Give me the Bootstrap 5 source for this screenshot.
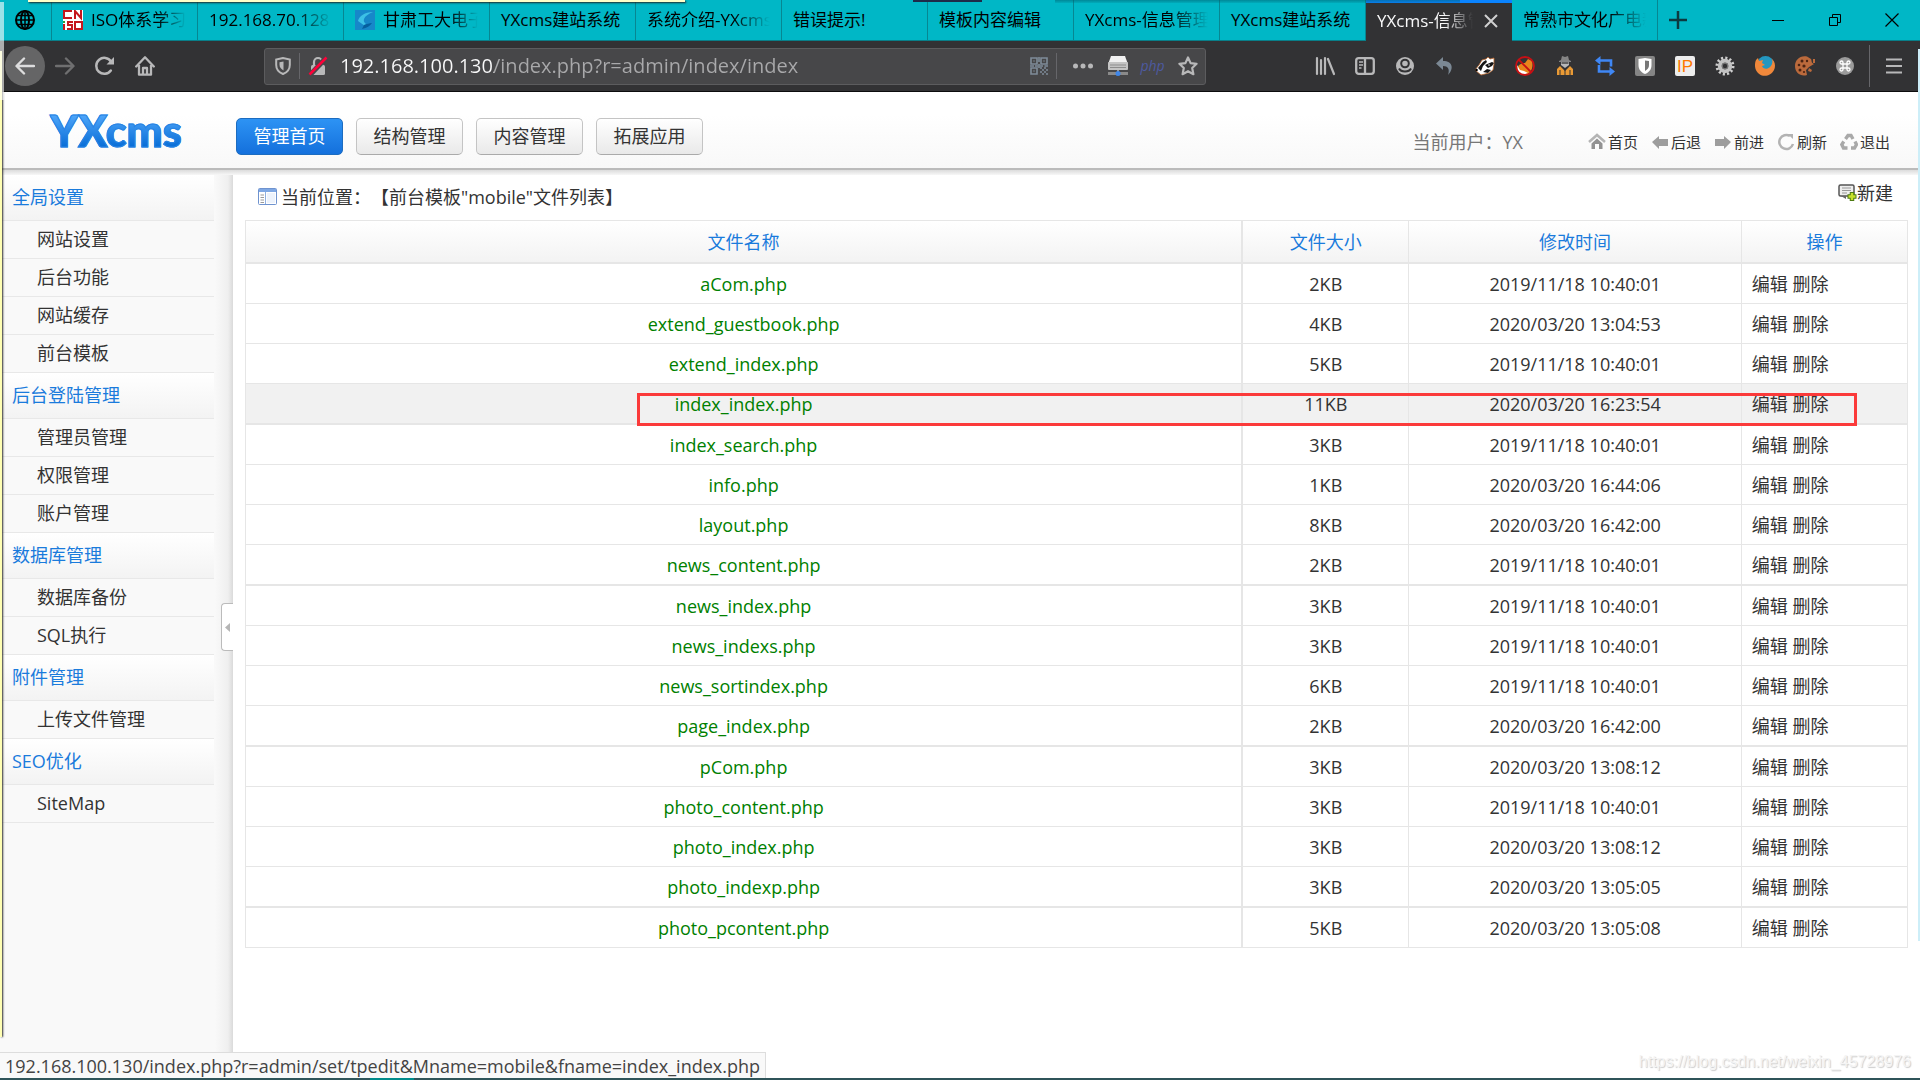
<!DOCTYPE html>
<html lang="zh-CN">
<head>
<meta charset="utf-8">
<meta name="viewport" content="width=device-width, initial-scale=1">
<title>YXcms-信息管理</title>
<link href="https://cdn.jsdelivr.net/npm/bootstrap@5.3.0/dist/css/bootstrap.min.css" rel="stylesheet">
<style>
body{font-family:"Open Sans","Noto Sans CJK SC",sans-serif;font-size:18px;line-height:24px;color:#333;background:#fff;overflow:hidden;text-spacing-trim:space-all}
a{text-decoration:none;color:inherit}
button{font:inherit}
svg{display:block;flex:none}

/* browser tabs */
.tabstrip{height:41px;background:#00b7c6;border-bottom:1px solid #087f89;color:#000;font-size:17px}
.btab{flex:0 1 146px;min-width:0;border-right:1px solid #078792;padding:0 11px;color:#000}
.btab.pinned{flex-basis:52px;padding:0 15px}
.btab .cap{flex:1;overflow:hidden;white-space:nowrap;-webkit-mask-image:linear-gradient(to right,#000 70%,transparent 100%)}
.btab.fits .cap{-webkit-mask-image:none;overflow:visible}
.btab.current{background:#323234;color:#f9f9fa;border-top:3px solid #0a84ff;border-right:0;height:41px;padding-bottom:3px}
.plainbtn{background:none;border:0;padding:0;color:inherit;display:flex;align-items:center;justify-content:center}
.winbtn{width:57px}

/* browser toolbar */
.toolbar{height:51px;background:#323234;border-bottom:1px solid #0c0c0d;color:#b8b8b9;padding-left:5px;padding-right:6px}
.tool{width:40px;height:40px}
.tool.back{border-radius:50%;background:#656566;color:#dcdcdd}
.tool.off{color:#6f6f70}
.urlbar{flex:0 1 942px;height:37px;margin-left:99px;background:#474749;border:1px solid #5c5c5e;border-radius:3px;padding-left:6px}
.urlbar .slot{width:35px}
.urlbar .insecure{margin-right:12px}
.vline{width:1px;height:26px;background:#66666a}
.vline.tall{height:42px}
.phpmark{font-size:14px;line-height:20px;color:#4d5aa0}
.urlbar input{flex:1;min-width:0;border:0;outline:0;padding:0;font-size:20px;line-height:28px;color:transparent;background:linear-gradient(to right,#f9f9fa 154px,#a9a9ab 154px);-webkit-background-clip:text;background-clip:text}

/* application header */
.apphead{height:78px;padding:12px 30px 0 50px;background:linear-gradient(#fff 30%,#f8f8f8);border-bottom:2px solid #bbb}
.brandname{font-family:"Lato Black",Lato,sans-serif;font-weight:900;font-size:43px;line-height:52px;width:186px;margin-bottom:10px;color:transparent;-webkit-text-stroke:1px #2783e4;background:linear-gradient(#4ba3f8 22%,#0b70d8 78%);-webkit-background-clip:text;background-clip:text}
.mainnav{gap:13px}
.mainnav .btn{width:107px;height:37px;padding:0;font-size:18px;line-height:24px;border-radius:5px;color:#333;border:1px solid #c4c4c4;border-bottom-color:#aaa;background:linear-gradient(#fff,#e9e9e9)}
.mainnav .btn.active{color:#fff;border-color:#1c6cc0;background:linear-gradient(#2d93f4,#1470dc)}
.who{color:#777;margin-right:65px;padding-top:12px}
.quick{gap:13px;font-size:15px;padding-top:12px}
.quick a{gap:2px}
.headshade{height:5px;background:linear-gradient(#dcdcdc,#f7f7f7)}

/* sidebar */
.side{width:233px;position:relative;background:linear-gradient(to right,#f9f9f9 215px,#efefef 228px,#dadada)}
.side nav{width:214px}
.side h2{margin:0;height:46px;padding:10px 12px;font-size:18px;line-height:24px;font-weight:400;color:#1a7bdc;border-bottom:1px solid #e8e8e8;background:linear-gradient(#fff,#f3f3f3)}
.side nav a{display:block;height:38px;padding:6px 37px;border-bottom:1px solid #e8e8e8;background:#f9f9f9}
.fold{position:absolute;right:0;top:428px;width:12px;height:48px;background:#fff;border:1px solid #bbb;border-right:0;border-radius:4px 0 0 4px}

/* content */
.pane{padding:0 12px}
.crumb{height:45px;padding:0 15px 2px 13px}
.files{width:100%;table-layout:fixed;border-collapse:separate;border-spacing:0;border:1px solid #e6e6e6;border-right:0;border-bottom:0}
.files th,.files td{padding:0 10px;border-right:1px solid #e6e6e6;border-bottom:1px solid #e6e6e6;text-align:center}
.files th{height:43px;font-weight:400;color:#1a7bdc;background:linear-gradient(#fff,#f3f3f3);border-bottom-width:2px}
.files td{height:40px}
.files tr>:first-child{border-right-width:2px}
.files tbody tr:nth-child(4n) td{height:41px;border-bottom-width:2px}
.files td:last-child{text-align:left}
.files td:first-child a{color:#008000}
.files .hot td{background:#f1f1f1}
.marker{position:absolute;left:392px;right:51px;top:173px;height:33px;border:3px solid #fb3a3a;pointer-events:none}

/* overlays */
.status{position:absolute;left:0;bottom:2px;background:#f9f9f9;border:1px solid #ddd;border-width:1px 1px 0 0;padding:1px 5px 0;color:#444}
.stamp{position:absolute;right:9px;bottom:6px;font:16px/24px "Liberation Sans",sans-serif;color:#f4f4f4;text-shadow:1px 1px 1px #ccc}
.taskedge{height:2px;background:linear-gradient(to right,#2f5459 370px,#008b8b 370px,#008b8b 414px,#2f5459 414px)}
.note-top{position:absolute;left:28px;top:0;width:657px;height:2px;background:#ffffc8;box-shadow:1px 1px 2px #222}
.note-left{position:absolute;left:0;top:51px;bottom:43px;width:2px;background:#ffffb4;box-shadow:1px 0 2px #222}
.ghost-left{position:absolute;left:0;top:2px;width:4px;height:98px;background:#ffffff99}
.glow-right{position:absolute;right:0;top:49px;bottom:139px;width:2px;background:#cdeef8}
.dark-top{position:absolute;left:913px;top:0;width:69px;height:2px;background:#1e2b4a}
.shade-top{position:absolute;left:1055px;top:0;width:405px;height:3px;background:linear-gradient(#00607088,#00607022)}
</style>
<script src="https://cdn.jsdelivr.net/npm/bootstrap@5.3.0/dist/js/bootstrap.bundle.min.js"></script>
</head>
<body>
<div class="d-flex flex-column vh-100 position-relative">

<div class="tabstrip d-flex align-items-stretch">
  <a href="#" class="btab pinned d-flex align-items-center" aria-label="Pinned tab"><svg width="20" height="20" viewBox="0 0 20 20" fill="none" stroke="#000" stroke-width="2"><circle cx="10" cy="10" r="9"/><ellipse cx="10" cy="10" rx="4" ry="9"/><path d="M10 1v18M1 10h18M2.500 5.500h15M2.500 14.500h15" stroke-width="1.500"/></svg></a>
  <a href="#" class="btab d-flex align-items-center gap-2"><svg width="20" height="20" viewBox="0 0 20 20"><path fill="#fff" d="M0 0h20v20H0z"/><g fill="none" stroke="#c4161c" stroke-width="2"><path d="M9 1H1v7h8M12 9V1l6 7V0M1 14v6M10 12H5v3h4v4H4M12 12h7v7h-7z"/></g><path fill="#2a9d3a" d="M0 11h2v2H0z"/></svg><span class="cap">ISO体系学习</span></a>
  <a href="#" class="btab d-flex align-items-center"><span class="cap">192.168.70.128</span></a>
  <a href="#" class="btab d-flex align-items-center gap-2"><svg width="20" height="20" viewBox="0 0 20 20"><path fill="#1787c9" d="M0 0h20v20H0z"/><path fill="#3cc0e6" d="M18 2C10 2 4 6 3 11l7 5 1-2c-4-3-3-8 7-12z"/><path fill="#065f9f" d="M7 19c5-1 8-3 10-6-2 0-6 1-8 2z"/></svg><span class="cap">甘肃工大电子</span></a>
  <a href="#" class="btab fits d-flex align-items-center"><span class="cap">YXcms建站系统</span></a>
  <a href="#" class="btab d-flex align-items-center"><span class="cap">系统介绍-YXcms</span></a>
  <a href="#" class="btab fits d-flex align-items-center"><span class="cap">错误提示!</span></a>
  <a href="#" class="btab fits d-flex align-items-center"><span class="cap">模板内容编辑</span></a>
  <a href="#" class="btab d-flex align-items-center"><span class="cap">YXcms-信息管理</span></a>
  <a href="#" class="btab fits d-flex align-items-center"><span class="cap">YXcms建站系统</span></a>
  <div class="btab current d-flex align-items-center"><span class="cap">YXcms-信息管</span><button class="plainbtn ms-2" aria-label="Close tab"><svg width="20" height="20" viewBox="0 0 20 20" stroke="#d0d0d0" stroke-width="2"><path d="M4 4l12 12M16 4L4 16"/></svg></button></div>
  <a href="#" class="btab d-flex align-items-center"><span class="cap">常熟市文化广电新</span></a>
  <button class="plainbtn tool" aria-label="New tab"><svg width="18" height="18" viewBox="0 0 18 18" stroke="#0c3a40" stroke-width="2.500"><path d="M9 0v18M0 9h18"/></svg></button>
  <div class="d-flex ms-auto">
    <button class="plainbtn winbtn" aria-label="Minimize"><svg width="12" height="12" viewBox="0 0 12 12" stroke="#000"><path d="M0 6.500h12"/></svg></button>
    <button class="plainbtn winbtn" aria-label="Restore"><svg width="12" height="12" viewBox="0 0 12 12" fill="none" stroke="#000"><path d="M.5 3.500h8v8h-8zM3.500 3.500v-3h8v8h-3"/></svg></button>
    <button class="plainbtn winbtn" aria-label="Close"><svg width="14" height="14" viewBox="0 0 14 14" stroke="#000" stroke-width="1.200"><path d="M.5.5l13 13M13.500.5l-13 13"/></svg></button>
  </div>
</div>

<div class="toolbar d-flex align-items-center">
  <button class="plainbtn tool back" aria-label="Back"><svg width="20" height="20" viewBox="0 0 20 20" fill="none" stroke="currentColor" stroke-width="2.400" stroke-linecap="round" stroke-linejoin="round"><path d="M19 10H2M9 2.500L1.500 10 9 17.500"/></svg></button>
  <button class="plainbtn tool off" aria-label="Forward"><svg width="20" height="20" viewBox="0 0 20 20" fill="none" stroke="currentColor" stroke-width="2.400" stroke-linecap="round" stroke-linejoin="round"><path d="M1 10h17M11 2.500l7.500 7.500L11 17.500"/></svg></button>
  <button class="plainbtn tool" aria-label="Reload"><svg width="20" height="20" viewBox="0 0 20 20" fill="none" stroke="currentColor" stroke-width="2.500" stroke-linecap="round"><path d="M15.800 14.500A8 8 0 1 1 16 5.500"/><path d="M19 1v7.500h-7.500z" fill="currentColor" stroke="none"/></svg></button>
  <button class="plainbtn tool" aria-label="Home"><svg width="20" height="20" viewBox="0 0 20 20" fill="none" stroke="currentColor" stroke-width="2.300" stroke-linecap="round" stroke-linejoin="round"><path d="M1.200 10.500L10 1.300l8.800 9.200M4 9v9.700h12V9M8 18v-6h4v6"/></svg></button>
  <div class="urlbar d-flex align-items-center">
    <svg class="mx-1" width="16" height="18" viewBox="0 0 16 18" fill="none" stroke="currentColor" stroke-width="2"><path d="M8 1L1.200 2.500V8c0 5 3 7.500 6.800 9 3.800-1.500 6.800-4 6.800-9V2.500z"/><path d="M8.500 4.500v9c-2.500-1.500-4-3-4-6V5.300z" fill="currentColor" stroke="none"/></svg>
    <span class="vline ms-1 me-2"></span>
    <svg class="insecure" width="20" height="20" viewBox="0 0 20 20"><path d="M6 10V6a4 4 0 0 1 8 0v4" fill="none" stroke="#b8b8b9" stroke-width="2.200"/><rect x="3" y="9" width="14" height="10" rx="1.500" fill="#b8b8b9"/><path d="M2 19L18 2" stroke="#474749" stroke-width="5"/><path d="M1.500 18.500L18.500 1.500" stroke="#ff0039" stroke-width="2.500"/></svg>
    <input type="text" aria-label="Address" value="192.168.100.130/index.php?r=admin/index/index" spellcheck="false">
    <button class="plainbtn slot" aria-label="QR code"><svg width="18" height="18" viewBox="0 0 18 18" fill="none" stroke="#7f8c99" stroke-width="1.600"><path d="M1 1h6v6H1zM11 1h6v6h-6zM1 11h6v6H1zM3.500 4h1M13.500 4h1M3.500 14h1M9 0v5M9 7v4M0 9h4M5 9h3M10 9h3M14.500 9H18"/><path stroke-dasharray="2 2" d="M10 11h8M12 13h6M10 15h8M12 17h6"/></svg></button>
    <span class="vline me-2"></span>
    <button class="plainbtn slot" aria-label="Page actions"><svg width="20" height="6" viewBox="0 0 20 6" fill="currentColor"><circle cx="2.500" cy="3" r="2.500"/><circle cx="10" cy="3" r="2.500"/><circle cx="17.500" cy="3" r="2.500"/></svg></button>
    <button class="plainbtn slot" aria-label="Server"><svg width="20" height="20" viewBox="0 0 20 20"><path d="M3 0h14l2.500 7h-19z" fill="#f1f1f1"/><rect y="6" width="20" height="8" rx="1" fill="#c4c4c4"/><path d="M2 9h16M2 11.500h16" stroke="#8d8d8d"/><path d="M0 17.500h20" stroke="#8a8a8a" stroke-width="3"/><path d="M10 14v2" stroke="#999" stroke-width="2"/><circle cx="10" cy="17.500" r="2.500" fill="#3f86e8"/></svg></button>
    <button class="plainbtn slot" aria-label="PHP"><em class="phpmark">php</em></button>
    <button class="plainbtn slot" aria-label="Bookmark"><svg width="20" height="20" viewBox="0 0 20 20" fill="none" stroke="currentColor" stroke-width="2.200" stroke-linejoin="round"><path d="M10 1.500l2.600 5.600 6 .7-4.400 4.200 1.200 6.200L10 15.200l-5.400 3L5.800 12 1.400 7.800l6-.7z"/></svg></button>
  </div>
  <div class="d-flex align-items-center ms-auto">
    <button class="plainbtn tool" aria-label="Library"><svg width="20" height="20" viewBox="0 0 20 20" stroke="currentColor" stroke-width="2.200" stroke-linecap="round"><path d="M2 2v16M6 4v14M10 2v16M13 3l6 15"/></svg></button>
    <button class="plainbtn tool" aria-label="Sidebar"><svg width="20" height="20" viewBox="0 0 20 20" fill="none" stroke="currentColor" stroke-width="2.300"><rect x="1.200" y="2.200" width="17.600" height="15.600" rx="2.500"/><path d="M10 2v16"/><path d="M4 6h4M4 9h4M4 12h2.500" stroke-width="1.500"/></svg></button>
    <button class="plainbtn tool" aria-label="Account"><svg width="20" height="20" viewBox="0 0 20 20"><circle cx="10" cy="10" r="9" fill="#b8b8b9"/><circle cx="10" cy="7.500" r="3.800" fill="#b8b8b9" stroke="#323234" stroke-width="2"/><path d="M4 12.500c2 4 10 4 12 0" fill="none" stroke="#323234" stroke-width="2"/></svg></button>
    <button class="plainbtn tool" aria-label="Undo"><svg width="20" height="20" viewBox="0 0 20 20"><path fill="#7b8894" d="M8 1L1 7.500 8 14v-4c5 0 7 3 5 9 6-6 5-14-5-14z"/></svg></button>
    <button class="plainbtn tool" aria-label="Privacy Badger"><svg width="20" height="20" viewBox="0 0 20 20"><path d="M0 14L4 9l3-5 4-1 2-2 2 2 4-1v6l-1 6-4 3-8 2z" fill="#fff" stroke="#b8642c" stroke-width=".8"/><path d="M3 12l5-6 3-2 1 2-4 4-2 5zM10 9l7-3 2 1-2 3-4 2zM8 16l4-3 4 1-3 3z" fill="#151515"/><circle cx="1.500" cy="14" r="1.300"/><circle cx="14" cy="9" r=".8" fill="#fff"/></svg></button>
    <button class="plainbtn tool" aria-label="Blocked fox"><svg width="20" height="20" viewBox="0 0 20 20"><path d="M2 15C2 9 6 7 10 7l3-4 4 2c2 7-2 14-8 14-4 0-6-2-7-4z" fill="#e8851c"/><path d="M2 9l3 5 4 1 4 2-5 2-5-3z" fill="#fff"/><circle cx="10" cy="10" r="9" fill="none" stroke="#c80f14" stroke-width="1.800"/><path d="M3.500 3.500l13 13" stroke="#c80f14" stroke-width="1.800"/></svg></button>
    <button class="plainbtn tool" aria-label="User agent"><svg width="20" height="20" viewBox="0 0 20 20"><path d="M6 4l1-4 3 1 3-1 1 4 2 1v1H4V5z" fill="#858585"/><path d="M6 6h8v3l-4 3-4-3z" fill="#b8b8b8"/><path d="M6.500 7h7" stroke="#444" stroke-width="1.500"/><path d="M5 10l5 5 5-5 3 3v6H2v-6z" fill="#e99a35"/><path d="M10 14v6M5 14v6M15 14v6" stroke="#323234"/></svg></button>
    <button class="plainbtn tool" aria-label="Loop"><svg width="20" height="20" viewBox="0 0 20 20" fill="none" stroke="#3f87f5" stroke-width="2.600"><path d="M4 4.500h12v6M16 15.500H4V9"/><path d="M5.500 0v9L0 4.500zM14.500 11v9l5.500-4.500z" fill="#3f87f5" stroke="none"/></svg></button>
    <button class="plainbtn tool" aria-label="Shield"><svg width="20" height="20" viewBox="0 0 20 20"><rect width="20" height="20" rx="2" fill="#858585"/><path d="M10 2L3.500 3v6c0 5 3 7.500 6.500 9 3.500-1.500 6.500-4 6.500-9V3z" fill="#fff"/><path d="M10 4.500V15c2.500-1.500 4-3 4-6V5z" fill="#777"/></svg></button>
    <button class="plainbtn tool" aria-label="IP"><svg width="20" height="20" viewBox="0 0 20 20"><rect width="20" height="20" rx="2" fill="#ededed"/><text x="10" y="16" text-anchor="middle" font-family="Liberation Sans" font-size="17" fill="#ff7700">IP</text></svg></button>
    <button class="plainbtn tool" aria-label="Settings"><svg width="20" height="20" viewBox="0 0 20 20" fill="none"><circle cx="10" cy="10" r="8" stroke="#cfcfcf" stroke-width="3" stroke-dasharray="2.100 2.090"/><circle cx="10" cy="10" r="5.200" stroke="#c2c2c2" stroke-width="4"/><circle cx="10" cy="10" r="2.800" stroke="#777" stroke-width="1.200"/></svg></button>
    <button class="plainbtn tool" aria-label="Firefox"><svg width="20" height="20" viewBox="0 0 20 20"><circle cx="10.500" cy="8.500" r="8.500" fill="#2497c0"/><path d="M1 4l2-2 1 3 4-1-1 3 3 2-3 1c1 3 5 4 8 1s3-7 1-9c4 3 5 8 3 12-3 6-11 8-16 3C0 14-1 9 1 4z" fill="#f0883b"/></svg></button>
    <button class="plainbtn tool" aria-label="Cookies"><svg width="20" height="20" viewBox="0 0 20 20"><path d="M12 .5C5-1 0 4 0 10c0 7 6 11 12 9l-1-5 3-3 5-3c-3-1-2-3-3-5z" fill="#bb6a3c"/><path d="M14 12l3 2-1 2-3-1z" fill="#bb6a3c"/><path d="M19 3v4" stroke="#bb6a3c" stroke-width="2"/><g fill="#4b2413"><circle cx="7" cy="5" r="1.500"/><circle cx="4" cy="9" r="1.300"/><circle cx="9" cy="10" r="1.600"/><circle cx="5" cy="14" r="1.500"/><circle cx="12" cy="5" r="1.200"/><circle cx="9" cy="16" r="1.100"/></g></svg></button>
    <button class="plainbtn tool" aria-label="Shortcuts"><svg width="20" height="20" viewBox="0 0 20 20" fill="none"><circle cx="10" cy="10" r="9" fill="#9b9b9b"/><path d="M8 8h4v4H8zM8 8H6.500A1.500 1.500 0 1 1 8 6.500zM12 8V6.500A1.500 1.500 0 1 1 13.500 8zM12 12h1.500a1.500 1.500 0 1 1-1.500 1.500zM8 12v1.500A1.500 1.500 0 1 1 6.500 12z" stroke="#fff" stroke-width="1.300"/></svg></button>
    <span class="vline tall ms-1"></span>
    <button class="plainbtn tool ms-1" aria-label="Menu"><svg width="16" height="16" viewBox="0 0 16 16" stroke="currentColor" stroke-width="2"><path d="M0 1.500h16M0 8h16M0 14.500h16"/></svg></button>
  </div>
</div>

<header class="apphead d-flex align-items-center">
  <a href="#" class="brandname">YXcms</a>
  <nav class="mainnav d-flex">
    <button class="btn active">管理首页</button>
    <button class="btn">结构管理</button>
    <button class="btn">内容管理</button>
    <button class="btn">拓展应用</button>
  </nav>
  <span class="who ms-auto">当前用户：YX</span>
  <nav class="quick d-flex">
    <a href="#" class="d-flex align-items-center"><svg width="18" height="18" viewBox="0 0 18 18"><path d="M1 9l8-7 8 7" fill="none" stroke="#b5b5b5" stroke-width="2.500"/><path d="M9 5.500L3.500 10.500V16H7v-5h4v5h3.500v-5.500z" fill="#929292"/></svg>首页</a>
    <a href="#" class="d-flex align-items-center"><svg width="18" height="18" viewBox="0 0 18 18"><path d="M1 9l7-6v3h9v7H8v3z" fill="#9d9d9d"/></svg>后退</a>
    <a href="#" class="d-flex align-items-center"><svg width="18" height="18" viewBox="0 0 18 18"><path d="M17 9l-7-6v3H1v7h9v3z" fill="#9d9d9d"/></svg>前进</a>
    <a href="#" class="d-flex align-items-center"><svg width="18" height="18" viewBox="0 0 18 18"><path d="M13 3A7 7 0 1 0 16 11" fill="none" stroke="#b3b3b3" stroke-width="2.500"/><path d="M10.500 1H16v5z" fill="#b3b3b3"/></svg>刷新</a>
    <a href="#" class="d-flex align-items-center"><svg width="18" height="18" viewBox="0 0 18 18" fill="none" stroke="#a9a9a9" stroke-width="3.400"><path d="M5.500 6L8 2.500h3L13 6M15 8.500l1.500 3-2 3.500H11M7.500 15h-4L1.800 11.500l2-3" /></svg>退出</a>
  </nav>
</header>
<div class="headshade"></div>

<div class="d-flex flex-grow-1">
  <aside class="side flex-shrink-0">
    <nav>
      <h2>全局设置</h2>
      <a href="#">网站设置</a><a href="#">后台功能</a><a href="#">网站缓存</a><a href="#">前台模板</a>
      <h2>后台登陆管理</h2>
      <a href="#">管理员管理</a><a href="#">权限管理</a><a href="#">账户管理</a>
      <h2>数据库管理</h2>
      <a href="#">数据库备份</a><a href="#">SQL执行</a>
      <h2>附件管理</h2>
      <a href="#">上传文件管理</a>
      <h2>SEO优化</h2>
      <a href="#">SiteMap</a>
    </nav>
    <button class="plainbtn fold" aria-label="Collapse sidebar"><svg width="5" height="9" viewBox="0 0 5 9"><path d="M5 0v9L0 4.500z" fill="#b5b5b5"/></svg></button>
  </aside>

  <main class="pane flex-grow-1">
    <div class="crumb d-flex align-items-center justify-content-between">
      <div class="d-flex align-items-center"><svg class="me-1" width="19" height="17" viewBox="0 0 19 17"><rect x=".5" y=".5" width="18" height="16" rx="1" fill="#fff" stroke="#6f93cf"/><path d="M1 1h17v3H1z" fill="#7fa8e4"/><path d="M7.500 4v12" stroke="#8fb0e0"/><path d="M2.500 7h3.500M2.500 9.500h3.500M2.500 12h3.500M2.500 14.500h3.500" stroke="#9a9a9a"/><path d="M9 5h8v10H9z" fill="#edf3fc"/></svg><span>当前位置：【前台模板"mobile"文件列表】</span></div>
      <a href="#" class="d-flex align-items-center pb-2"><svg width="19" height="18" viewBox="0 0 19 18"><rect x="1" y="1" width="15" height="11" rx="1.500" fill="#eee" stroke="#555" stroke-width="1.500"/><path d="M4 4h9M4 6.500h9M4 9h5" stroke="#999"/><path d="M3 12h5v3z" fill="#666"/><path d="M14 8v9M9.500 12.500h9" stroke="#4c7a12" stroke-width="4.500"/><path d="M14 9v7M10.500 12.500h7" stroke="#c6e02a" stroke-width="2.500"/></svg>新建</a>
    </div>
    <div class="position-relative">
      <table class="files">
        <colgroup><col style="width:60%"><col style="width:10%"><col style="width:20%"><col style="width:10%"></colgroup>
        <thead><tr><th>文件名称</th><th>文件大小</th><th>修改时间</th><th>操作</th></tr></thead>
        <tbody>
          <tr><td><a href="#">aCom.php</a></td><td>2KB</td><td>2019/11/18 10:40:01</td><td><a href="#">编辑</a> <a href="#">删除</a></td></tr>
          <tr><td><a href="#">extend_guestbook.php</a></td><td>4KB</td><td>2020/03/20 13:04:53</td><td><a href="#">编辑</a> <a href="#">删除</a></td></tr>
          <tr><td><a href="#">extend_index.php</a></td><td>5KB</td><td>2019/11/18 10:40:01</td><td><a href="#">编辑</a> <a href="#">删除</a></td></tr>
          <tr class="hot"><td><a href="#">index_index.php</a></td><td>11KB</td><td>2020/03/20 16:23:54</td><td><a href="#">编辑</a> <a href="#">删除</a></td></tr>
          <tr><td><a href="#">index_search.php</a></td><td>3KB</td><td>2019/11/18 10:40:01</td><td><a href="#">编辑</a> <a href="#">删除</a></td></tr>
          <tr><td><a href="#">info.php</a></td><td>1KB</td><td>2020/03/20 16:44:06</td><td><a href="#">编辑</a> <a href="#">删除</a></td></tr>
          <tr><td><a href="#">layout.php</a></td><td>8KB</td><td>2020/03/20 16:42:00</td><td><a href="#">编辑</a> <a href="#">删除</a></td></tr>
          <tr><td><a href="#">news_content.php</a></td><td>2KB</td><td>2019/11/18 10:40:01</td><td><a href="#">编辑</a> <a href="#">删除</a></td></tr>
          <tr><td><a href="#">news_index.php</a></td><td>3KB</td><td>2019/11/18 10:40:01</td><td><a href="#">编辑</a> <a href="#">删除</a></td></tr>
          <tr><td><a href="#">news_indexs.php</a></td><td>3KB</td><td>2019/11/18 10:40:01</td><td><a href="#">编辑</a> <a href="#">删除</a></td></tr>
          <tr><td><a href="#">news_sortindex.php</a></td><td>6KB</td><td>2019/11/18 10:40:01</td><td><a href="#">编辑</a> <a href="#">删除</a></td></tr>
          <tr><td><a href="#">page_index.php</a></td><td>2KB</td><td>2020/03/20 16:42:00</td><td><a href="#">编辑</a> <a href="#">删除</a></td></tr>
          <tr><td><a href="#">pCom.php</a></td><td>3KB</td><td>2020/03/20 13:08:12</td><td><a href="#">编辑</a> <a href="#">删除</a></td></tr>
          <tr><td><a href="#">photo_content.php</a></td><td>3KB</td><td>2019/11/18 10:40:01</td><td><a href="#">编辑</a> <a href="#">删除</a></td></tr>
          <tr><td><a href="#">photo_index.php</a></td><td>3KB</td><td>2020/03/20 13:08:12</td><td><a href="#">编辑</a> <a href="#">删除</a></td></tr>
          <tr><td><a href="#">photo_indexp.php</a></td><td>3KB</td><td>2020/03/20 13:05:05</td><td><a href="#">编辑</a> <a href="#">删除</a></td></tr>
          <tr><td><a href="#">photo_pcontent.php</a></td><td>5KB</td><td>2020/03/20 13:05:08</td><td><a href="#">编辑</a> <a href="#">删除</a></td></tr>
        </tbody>
      </table>
      <div class="marker"></div>
    </div>
  </main>
</div>

<div class="taskedge"></div>
<div class="status">192.168.100.130/index.php?r=admin/set/tpedit&amp;Mname=mobile&amp;fname=index_index.php</div>
<div class="stamp">https://blog.csdn.net/weixin_45728976</div>
<div class="shade-top"></div>
<div class="dark-top"></div>
<div class="note-top"></div>
<div class="note-left"></div>
<div class="ghost-left"></div>
<div class="glow-right"></div>
</div>
</body>
</html>
